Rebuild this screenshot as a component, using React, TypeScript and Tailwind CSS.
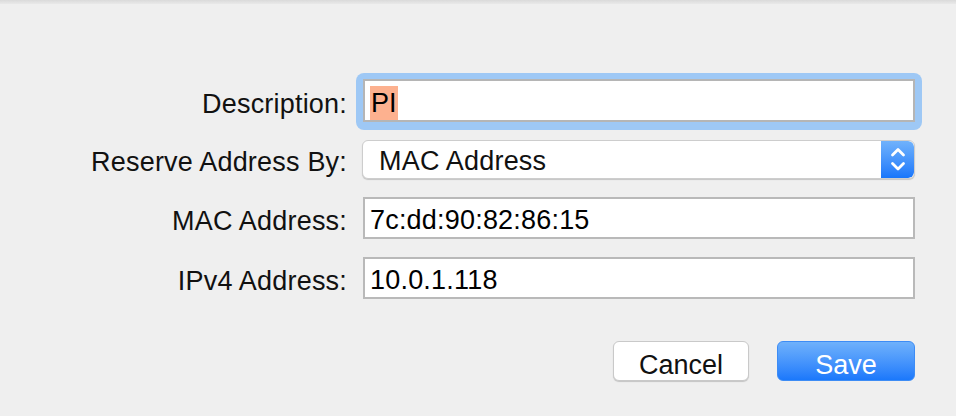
import React from 'react';

const font = "font-['Liberation_Sans',Arial,Helvetica,sans-serif]";

const Label = ({ children }: { children: React.ReactNode }) => (
  <div className="w-[347px] shrink-0 text-right text-[27px] leading-[31px] tracking-[0.2px] text-[#111] pt-[6px]">
    {children}
  </div>
);

const TextField = ({ value }: { value: string }) => (
  <div className="ml-[16px] w-[552px] h-[42px] bg-white border-2 border-[#b9b9b9] flex items-center pl-[5px] pt-[5px] text-[27px] tracking-[0.2px] text-black">
    {value}
  </div>
);

const Stepper = () => (
  <div className="w-[33px] self-stretch rounded-r-[6px] bg-gradient-to-b from-[#70b2fb] to-[#1776fb] flex items-center justify-center">
    <svg width="16" height="29" viewBox="0 0 16 29" fill="none">
      <path d="M2.5 10 L8 4.5 L13.5 10" stroke="white" strokeWidth="2.8" strokeLinecap="round" strokeLinejoin="round" />
      <path d="M2.5 18.5 L8 24 L13.5 18.5" stroke="white" strokeWidth="2.8" strokeLinecap="round" strokeLinejoin="round" />
    </svg>
  </div>
);

export default function App() {
  return (
    <div className={`${font} w-[956px] h-[416px] bg-[#efefef] flex flex-col overflow-hidden`}>
      <div className="h-[4px] bg-gradient-to-b from-[#dadada] to-[#e9e9e9]" />

      <div className="flex flex-col mt-[69px]">
        {/* Description */}
        <div className="flex items-center">
          <Label>Description:</Label>
          <div className="ml-[9px] w-[566px] p-[7px] pt-[6px] pb-[8px] rounded-[8px] bg-[#9ec8f5]">
            <div className="h-[43px] bg-white border-2 border-[#b5b5b5] flex items-center pl-[5px] pt-[4px] text-[27px] text-black">
              <span className="bg-[#fdb18f] px-[1px] leading-[34px]">PI</span>
            </div>
          </div>
        </div>

        {/* Reserve Address By */}
        <div className="flex items-center mt-[10px]">
          <Label>Reserve Address By:</Label>
          <div className="ml-[15px] w-[553px] h-[39px] bg-white rounded-[6px] border border-[#cdcdcd] shadow-[0_1px_1px_rgba(0,0,0,0.18)] flex overflow-hidden">
            <div className="flex-1 flex items-center pl-[16px] pt-[4px] text-[27px] tracking-[0.2px] text-[#111]">MAC Address</div>
            <Stepper />
          </div>
        </div>

        {/* MAC */}
        <div className="flex items-center mt-[18px]">
          <Label>MAC Address:</Label>
          <TextField value="7c:dd:90:82:86:15" />
        </div>

        {/* IPv4 */}
        <div className="flex items-center mt-[18px]">
          <Label>IPv4 Address:</Label>
          <TextField value="10.0.1.118" />
        </div>

        {/* Buttons */}
        <div className="flex justify-end gap-[28px] mt-[42px] pr-[41px]">
          <button className="w-[136px] h-[40px] rounded-[6px] bg-white border border-[#c9c9c9] shadow-[0_1px_1px_rgba(0,0,0,0.18)] text-[27px] text-[#111] pt-[3px]">
            Cancel
          </button>
          <button className="w-[138px] h-[40px] rounded-[6px] bg-gradient-to-b from-[#6fb1fb] to-[#1a78fb] border border-[#3d8cf5] text-[27px] text-white pt-[3px]">
            Save
          </button>
        </div>
      </div>
    </div>
  );
}
